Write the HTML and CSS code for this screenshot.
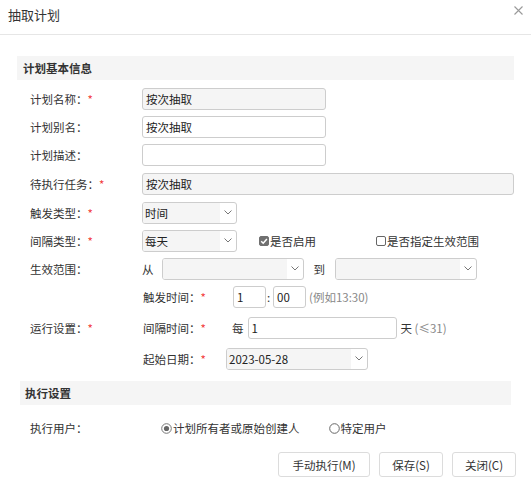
FILE: index.html
```html
<!DOCTYPE html>
<html lang="zh-CN">
<head>
<meta charset="utf-8">
<title>抽取计划</title>
<link rel="stylesheet" href="styles.css">
</head>
<body>
<div class="dialog">
  <div class="header">
    <span class="title">抽取计划</span>
    <svg class="close" width="9" height="9" viewBox="0 0 9 9"><path d="M0.5 0.5L8.5 8.5M8.5 0.5L0.5 8.5" stroke="#9a9a9a" stroke-width="1.1" fill="none"/></svg>
  </div>
  <div class="content">
    <div class="section-title">计划基本信息</div>
    <div class="form">
      <div class="row">
        <div class="label">计划名称：<span class="req">*</span></div>
        <div class="field ro w184">按次抽取</div>
      </div>
      <div class="row">
        <div class="label">计划别名：</div>
        <div class="field w184">按次抽取</div>
      </div>
      <div class="row">
        <div class="label">计划描述：</div>
        <div class="field w184"></div>
      </div>
      <div class="row shift">
        <div class="label">待执行任务：<span class="req">*</span></div>
        <div class="field ro grow">按次抽取</div>
      </div>
      <div class="row shift">
        <div class="label">触发类型：<span class="req">*</span></div>
        <div class="select w95"><span class="val">时间</span><span class="arrow"><svg width="8" height="5" viewBox="0 0 8 5"><path d="M0.5 0.5L4 4L7.5 0.5" stroke="#777" fill="none"/></svg></span></div>
      </div>
      <div class="row">
        <div class="label">间隔类型：<span class="req">*</span></div>
        <div class="select w95"><span class="val">每天</span><span class="arrow"><svg width="8" height="5" viewBox="0 0 8 5"><path d="M0.5 0.5L4 4L7.5 0.5" stroke="#777" fill="none"/></svg></span></div>
        <div class="check-item first"><span class="check on"><svg width="10" height="10" viewBox="0 0 10 10"><path d="M2.2 5.2L4.2 7.2L7.9 2.9" stroke="#fff" stroke-width="1.5" fill="none"/></svg></span>是否启用</div>
        <div class="check-item"><span class="check"></span>是否指定生效范围</div>
      </div>
      <div class="row">
        <div class="label">生效范围：</div>
        <span class="from">从</span>
        <div class="select w142"><span class="val"></span><span class="arrow"><svg width="8" height="5" viewBox="0 0 8 5"><path d="M0.5 0.5L4 4L7.5 0.5" stroke="#777" fill="none"/></svg></span></div>
        <span class="to">到</span>
        <div class="select w142"><span class="val"></span><span class="arrow"><svg width="8" height="5" viewBox="0 0 8 5"><path d="M0.5 0.5L4 4L7.5 0.5" stroke="#777" fill="none"/></svg></span></div>
      </div>
      <div class="group">
        <div class="label">运行设置：<span class="req">*</span></div>
        <div class="subrows">
          <div class="row">
            <div class="sublabel">触发时间：<span class="req">*</span></div>
            <div class="time">
              <div class="field w33">1</div>
              <span class="colon">:</span>
              <div class="field w33">00</div>
              <span class="hint">(例如13:30)</span>
            </div>
          </div>
          <div class="row">
            <div class="sublabel">间隔时间：<span class="req">*</span></div>
            <span class="every">每</span>
            <div class="field w149">1</div>
            <span class="unit">天 <span class="hint">(≤31)</span></span>
          </div>
          <div class="row">
            <div class="sublabel">起始日期：<span class="req">*</span></div>
            <div class="select w142"><span class="val">2023-05-28</span><span class="arrow"><svg width="8" height="5" viewBox="0 0 8 5"><path d="M0.5 0.5L4 4L7.5 0.5" stroke="#777" fill="none"/></svg></span></div>
          </div>
        </div>
      </div>
    </div>
    <div class="section-title inset">执行设置</div>
    <div class="form exec">
      <div class="row">
        <div class="label">执行用户：</div>
        <div class="radio-item first"><svg class="radio" width="11" height="11" viewBox="0 0 11 11"><circle cx="5.5" cy="5.5" r="4.8" stroke="#777" fill="#fff"/><circle cx="5.5" cy="5.5" r="2.6" fill="#666"/></svg>计划所有者或原始创建人</div>
        <div class="radio-item second"><svg class="radio" width="11" height="11" viewBox="0 0 11 11"><circle cx="5.5" cy="5.5" r="4.8" stroke="#666" fill="#fff"/></svg>特定用户</div>
      </div>
    </div>
    <div class="actions">
      <button class="btn wide">手动执行(M)</button>
      <button class="btn">保存(S)</button>
      <button class="btn">关闭(C)</button>
    </div>
  </div>
</div>
</body>
</html>
```
FILE: styles.css
```css
* { box-sizing: border-box; }
body {
  margin: 0;
  font-family: "Noto Sans CJK SC", "Noto Sans", sans-serif;
  font-size: 11.5px;
  color: #333;
  background: #fff;
}
.dialog { width: 531px; }
.header {
  height: 35px;
  border-bottom: 1px solid #e6e6e6;
  display: flex;
  justify-content: space-between;
  align-items: flex-start;
  padding: 6px 8px 0 8px;
}
.title { font-size: 13px; line-height: 18px; color: #333; }
.close { display: block; }
.content { padding: 21px 17px 0 17px; }
.section-title {
  height: 24px;
  line-height: 24px;
  background: #f5f5f5;
  padding-left: 6px;
  font-weight: bold;
  color: #333;
}
.section-title.inset { margin: 11px 3px 0 3px; padding-left: 5px; }
.form {
  display: flex;
  flex-direction: column;
  gap: 6px;
  margin-top: 8px;
  padding-left: 13px;
}
.form.exec { margin-top: 12px; }
.row { display: flex; align-items: center; height: 22px; }
.row.shift { margin-top: 1px; }
.label { width: 112px; flex: none; white-space: nowrap; }
.req { color: #f23a3a; }
.field {
  height: 22px;
  border: 1px solid #cdcdcd;
  border-radius: 3px;
  padding: 0 3px;
  line-height: 20px;
  background: #fff;
  white-space: nowrap;
  color: #222;
}
.field.ro { background: #f5f5f5; }
.w184 { width: 184px; }
.w33 { width: 33px; }
.w149 { width: 149px; }
.grow { flex: 1; }
.select {
  display: flex;
  height: 22px;
  border: 1px solid #cdcdcd;
  border-radius: 3px;
  background: #fff;
  overflow: hidden;
  flex: none;
}
.w95 { width: 95px; }
.w142 { width: 142px; }
.select .val {
  flex: 1;
  background: #f5f5f5;
  padding-left: 2px;
  line-height: 20px;
  color: #222;
}
.select .arrow {
  width: 16px;
  display: flex;
  align-items: center;
  justify-content: center;
  padding-bottom: 2px;
}
.select .arrow svg { display: block; }
.check-item { display: flex; align-items: center; white-space: nowrap; }
.check-item.first { margin-left: 22px; width: 117px; }
.check {
  width: 10px;
  height: 10px;
  border: 1px solid #666;
  border-radius: 2px;
  background: #fff;
  margin-right: 1px;
  display: block;
}
.check.on { background: #707070; border-color: #707070; }
.check.on svg { display: block; margin: -1px; }
.from { margin-right: 8px; }
.to { margin: 0 10px; }
.group { display: flex; align-items: center; }
.subrows { display: flex; flex-direction: column; gap: 9px; }
.sublabel { width: 84px; flex: none; padding-left: 1px; white-space: nowrap; }
.time { display: flex; align-items: center; margin-left: 7px; }
.colon { width: 7px; padding-left: 1px; }
.hint { color: #888; }
.time .hint { margin-left: 3px; }
.every { margin-left: 6px; margin-right: 4px; }
.unit { margin-left: 4px; }
.radio-item { display: flex; align-items: center; white-space: nowrap; }
.radio-item.first { margin-left: 19px; }
.radio-item.second { margin-left: 29px; }
.radio { display: block; margin-right: 1px; }
.actions {
  display: flex;
  justify-content: flex-end;
  gap: 9px;
  margin-top: 13px;
  margin-right: -2px;
}
.btn {
  width: 64px;
  height: 25px;
  border: 1px solid #dcdcdc;
  border-radius: 3px;
  background: #fff;
  font-family: inherit;
  font-size: 11.5px;
  color: #333;
  padding: 0;
}
.btn.wide { width: 92px; }
```
